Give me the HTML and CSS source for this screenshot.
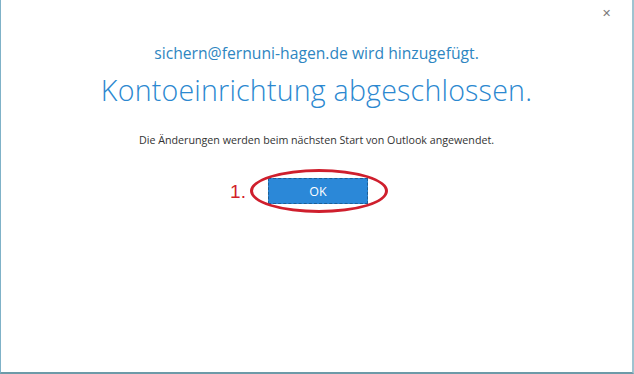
FILE: index.html
```html
<!DOCTYPE html>
<html lang="de">
<head>
    <meta charset="UTF-8">
    <title>Kontoeinrichtung</title>
    <link rel="stylesheet" href="styles.css">
</head>
<body>
    <div class="window">
        <div class="titlebar">
            <span class="close">&#x2715;</span>
        </div>
        <div class="content">
            <p class="account">sichern@fernuni-hagen.de wird hinzugefügt.</p>
            <h1>Kontoeinrichtung abgeschlossen.</h1>
            <p class="note">Die Änderungen werden beim nächsten Start von Outlook angewendet.</p>
            <div class="action-row">
                <span class="step">1.</span>
                <div class="ok-wrap">
                    <button class="ok" type="button">OK</button>
                    <span class="ring"></span>
                </div>
            </div>
        </div>
    </div>
</body>
</html>
```

FILE: styles.css
```css
body {
    margin: 0;
    background: #ffffff;
    font-family: "Open Sans", "Noto Sans", sans-serif;
}
.window {
    width: 634px;
    height: 374px;
    box-sizing: border-box;
    border-left: 1px solid #7fb2c8;
    border-right: 2px solid #9fc3d0;
    border-bottom: 2px solid #6d9aa8;
    background: #ffffff;
}
.titlebar {
    display: flex;
    justify-content: flex-end;
    height: 30px;
    padding-right: 21px;
}
.close {
    color: #7a7a7a;
    font-size: 11px;
    line-height: 26px;
}
.content {
    display: flex;
    flex-direction: column;
    align-items: center;
}
.account {
    margin: 12px 0 0;
    font-size: 15.7px;
    color: #2e86c1;
}
h1 {
    margin: 6px 0 0;
    font-size: 28.6px;
    font-weight: 300;
    color: #2b88d0;
    letter-spacing: 0.2px;
}
.note {
    margin: 24px 0 0;
    font-size: 10.7px;
    color: #333333;
}
.action-row {
    display: flex;
    align-items: center;
    margin-top: 31px;
    margin-left: -35px;
}
.step {
    color: #d21f2b;
    font-family: "Liberation Sans", sans-serif;
    font-size: 19px;
    margin-right: 22px;
    margin-top: 1px;
}
.ok-wrap {
    position: relative;
}
.ok {
    display: block;
    width: 100px;
    height: 26px;
    background: #2b88d8;
    border: 1px dashed #1d5f96;
    outline: none;
    color: #ffffff;
    font-family: "Open Sans", sans-serif;
    font-size: 12.5px;
    padding: 0;
}
.ring {
    position: absolute;
    left: -18px;
    top: -9px;
    width: 132px;
    height: 38px;
    border: 3px solid #cf1f2d;
    border-radius: 50%;
}
```
